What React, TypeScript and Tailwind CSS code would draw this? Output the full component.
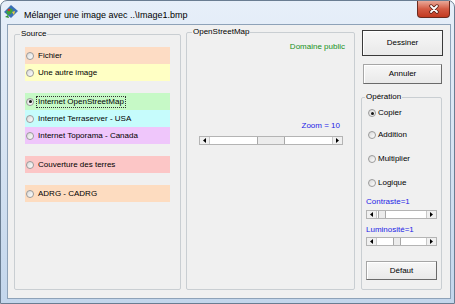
import React from "react";

const SOURCES = [
  [
    { label: "Fichier", bg: "bg-[#fddcc4]" },
    { label: "Une autre image", bg: "bg-[#ffffc4]" },
  ],
  [
    { label: "Internet OpenStreetMap", bg: "bg-[#c6f9c6]", on: true },
    { label: "Internet Terraserver - USA", bg: "bg-[#c6fcfc]" },
    { label: "Internet Toporama - Canada", bg: "bg-[#efc6fb]" },
  ],
  [{ label: "Couverture des terres", bg: "bg-[#fcc6c6]" }],
  [{ label: "ADRG - CADRG", bg: "bg-[#fddcc0]" }],
];

const OPS = [
  { label: "Copier", on: true, cls: "mt-[5px]" },
  { label: "Addition", cls: "mt-[10px]" },
  { label: "Multiplier", cls: "mt-[12px]" },
  { label: "Logique", cls: "mt-[12px]" },
];

function Radio({ on }: { on?: boolean }) {
  return (
    <span className="w-[8px] h-[8px] shrink-0 rounded-full border border-[#9a9a9a] bg-gradient-to-br from-[#d8d8d8] to-white flex items-center justify-center">
      {on && <span className="w-[3px] h-[3px] rounded-full bg-[#151515]" />}
    </span>
  );
}

function Arrow({ dir }: { dir: "l" | "r" }) {
  return (
    <span className="w-[9px] shrink-0 bg-[#f0f0f0] flex items-center justify-center">
      <svg width="3" height="5" viewBox="0 0 3 5">
        <polygon points={dir === "l" ? "3,0 3,5 0,2.5" : "0,0 0,5 3,2.5"} fill="#000" />
      </svg>
    </span>
  );
}

function HScroll({ cls, before, thumb }: { cls: string; before: string; thumb: string }) {
  return (
    <div className={`flex h-[9px] border border-[#b4b4b4] bg-white ${cls}`}>
      <Arrow dir="l" />
      <span className="w-px bg-[#c8c8c8]" />
      <span className={before} />
      <span className={`bg-[#ececec] border-x border-[#a8a8a8] ${thumb}`} />
      <span className="flex-1" />
      <span className="w-px bg-[#c8c8c8]" />
      <Arrow dir="r" />
    </div>
  );
}

function Btn({ label, cls, def }: { label: string; cls: string; def?: boolean }) {
  return (
    <div
      className={`flex items-center justify-center text-[8px] leading-none text-black bg-gradient-to-b from-[#f7f7f7] to-[#e9e9e9] shadow-[inset_1px_1px_0_#ffffff] ${
        def ? "border border-[#3a3a3a]" : "border border-[#a6a6a6] border-b-[#6a6a6a] border-r-[#6a6a6a]"
      } ${cls}`}
    >
      {label}
    </div>
  );
}

function MapIcon() {
  return (
    <svg width="16" height="16" viewBox="0 0 16 16" className="mt-[2px] ml-[2px] shrink-0">
      <polygon points="1,9 8,2 15,8 8,15" fill="#3b6fb6" />
      <polygon points="3,9 7,5 10,7 8,11 5,12" fill="#3ca33c" />
      <polygon points="9,9 12,8 11,12" fill="#e8d23a" />
      <circle cx="6" cy="7" r="1.3" fill="#d23a2a" />
      <polygon points="2,14 5,12 6,15" fill="#2f8f2f" />
    </svg>
  );
}

function CloseBtn() {
  return (
    <div className="w-[33px] h-[17px] mr-[4px] rounded-b-[4px] border border-t-0 border-[#6b2a1e] bg-gradient-to-b from-[#e9a898] via-[#d35a43] to-[#c2391f] flex items-center justify-center">
      <svg width="12" height="10" viewBox="0 0 12 10">
        <path d="M3 2 L9 8 M9 2 L3 8" stroke="#5a1e14" strokeWidth="3.4" strokeLinecap="round" />
        <path d="M3 2 L9 8 M9 2 L3 8" stroke="#ffffff" strokeWidth="1.8" strokeLinecap="round" />
      </svg>
    </div>
  );
}

export default function App() {
  return (
    <div className="w-[455px] h-[304px] bg-white font-['Liberation_Sans',Arial,sans-serif] text-black">
      <div className="w-full h-full rounded-t-[7px] border border-[#6a7d92] bg-gradient-to-b from-[#e7eff9] via-[#d6e3f2] to-[#c3d6ec] flex flex-col">
        {/* title bar */}
        <div className="h-[23px] shrink-0 flex items-start">
          <MapIcon />
          <span className="ml-[5px] mt-[9px] text-[9px] leading-[10px] whitespace-nowrap">
            Mélanger une image avec ..\Image1.bmp
          </span>
          <div className="flex-1" />
          <CloseBtn />
        </div>

        {/* client area */}
        <div className="ml-[6px] mr-[3px] h-[275px] border border-[#8ea2b8] bg-[#f0f0f0] flex items-start">
          {/* Source */}
          <fieldset className="ml-[6px] mt-[4px] w-[167px] h-[261px] border border-[#c9ced2] rounded-[2px]">
            <legend className="ml-[5px] px-[1px] text-[8px] leading-[10px]">Source</legend>
            <div className="pt-[8px] pl-[10px] flex flex-col gap-[12px]">
              {SOURCES.map((group, gi) => (
                <div key={gi} className="flex flex-col">
                  {group.map((s) => (
                    <div key={s.label} className={`w-[145px] h-[17px] pl-[1px] flex items-center gap-[4px] ${s.bg}`}>
                      <Radio on={"on" in s && s.on} />
                      <span
                        className={`text-[8px] leading-[10px] whitespace-nowrap ${
                          "on" in s && s.on ? "-ml-[1px] px-[1px] outline outline-1 outline-dotted outline-[#333]" : ""
                        }`}
                      >
                        {s.label}
                      </span>
                    </div>
                  ))}
                </div>
              ))}
            </div>
          </fieldset>

          {/* OpenStreetMap */}
          <fieldset className="ml-[5px] mt-[2px] w-[169px] h-[263px] border border-[#c9ced2] rounded-[2px]">
            <legend className="ml-[5px] px-[1px] text-[8px] leading-[10px]">OpenStreetMap</legend>
            <div className="flex flex-col">
              <p className="mt-[5px] pr-[9px] text-right text-[8px] leading-[10px] text-[#17901a]">Domaine public</p>
              <p className="mt-[69px] pr-[14px] text-right text-[8px] leading-[10px] text-[#2323e6]">Zoom = 10</p>
              <HScroll cls="mt-[5px] ml-[12px] w-[144px]" before="w-[47px]" thumb="w-[28px]" />
            </div>
          </fieldset>

          {/* right column */}
          <div className="ml-[6px] mt-[5px] w-[82px] flex flex-col">
            <Btn label="Dessiner" def cls="ml-[1px] w-[81px] h-[26px]" />
            <Btn label="Annuler" cls="ml-[2px] mt-[8px] w-[79px] h-[20px]" />
            <fieldset className="mt-[8px] w-[81px] h-[198px] border border-[#c9ced2] rounded-[2px]">
              <legend className="ml-[3px] px-[1px] text-[8px] leading-[10px]">Opération</legend>
              <div className="flex flex-col">
                {OPS.map((o) => (
                  <div key={o.label} className={`h-[12px] pl-[6px] flex items-center gap-[2px] ${o.cls}`}>
                    <Radio on={o.on} />
                    <span className="text-[8px] leading-[10px]">{o.label}</span>
                  </div>
                ))}
                <p className="mt-[8px] pl-[4px] text-[8px] leading-[10px] text-[#2323e6]">Contraste=1</p>
                <HScroll cls="mt-[3px] ml-[4px] w-[71px]" before="w-[1px]" thumb="w-[8px]" />
                <p className="mt-[6px] pl-[4px] text-[8px] leading-[10px] text-[#2323e6]">Luminosité=1</p>
                <HScroll cls="mt-[2px] ml-[4px] w-[71px]" before="w-[16px]" thumb="w-[8px]" />
                <Btn label="Défaut" cls="mt-[15px] ml-[4px] w-[71px] h-[19px]" />
              </div>
            </fieldset>
          </div>
        </div>
      </div>
    </div>
  );
}
